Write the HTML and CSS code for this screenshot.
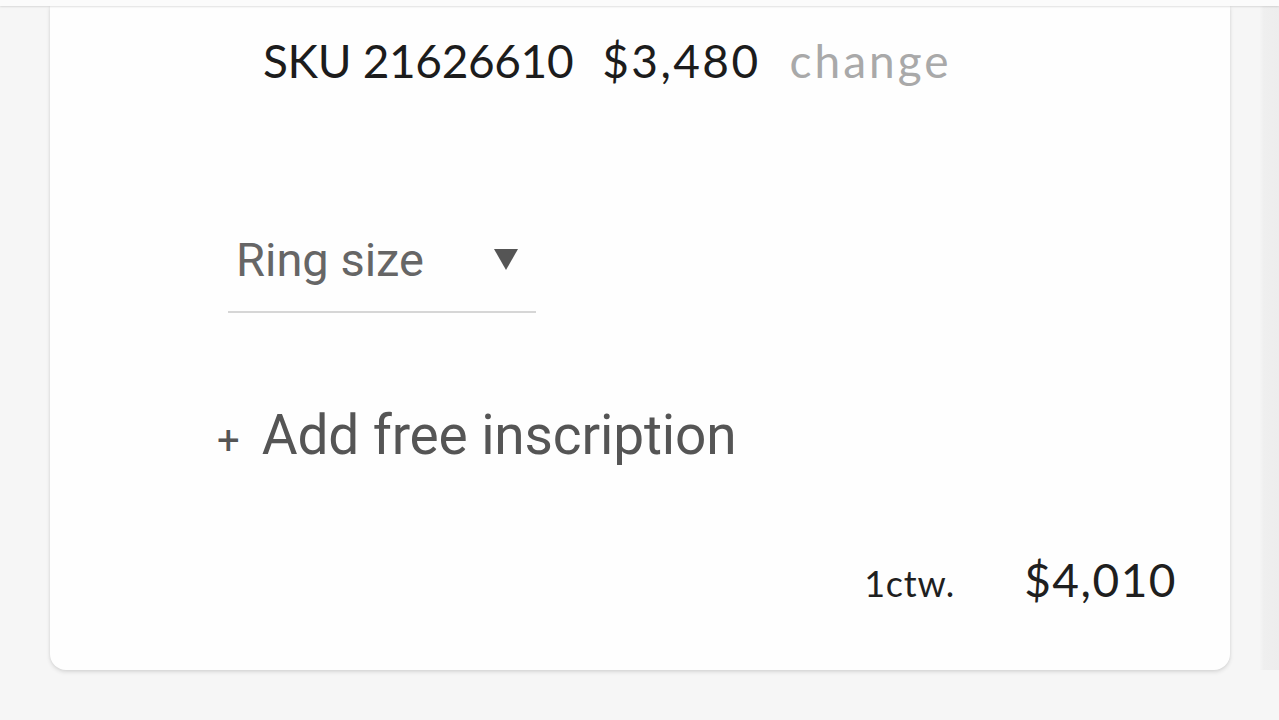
FILE: index.html
```html
<!DOCTYPE html>
<html>
<head>
<meta charset="utf-8">
<link rel="stylesheet" href="styles.css">
</head>
<body>
<div class="topbar"></div>
<div class="page">
  <div class="card">
    <div class="sku-row">
      <span class="sku">SKU 21626610</span>
      <span class="price">$3,480</span>
      <span class="change">change</span>
    </div>
    <div class="select">
      <span class="select-label">Ring size</span>
      <svg class="caret" width="24" height="21" viewBox="0 0 24 21"><polygon points="0,0 24,0 12,21" fill="#555"/></svg>
    </div>
    <div class="inscription">
      <span class="plus">+</span>
      <span class="ins-text">Add free inscription</span>
    </div>
    <div class="total-row">
      <span class="ctw">1ctw.</span>
      <span class="total">$4,010</span>
    </div>
  </div>
  <div class="rail"></div>
</div>
</body>
</html>
```
FILE: styles.css
```css
html, body {
  margin: 0;
  padding: 0;
}
body {
  width: 1279px;
  height: 720px;
  overflow: hidden;
  background: #f6f6f6;
  font-family: Lato, "Open Sans", sans-serif;
}
.topbar {
  height: 6px;
  background: #fbfbfb;
  box-shadow: 0 1px 2px rgba(0,0,0,0.12);
  position: relative;
  z-index: 2;
}
.page {
  display: flex;
  padding-left: 50px;
}
.card {
  width: 1180px;
  height: 664px;
  box-sizing: border-box;
  background: #fefefe;
  border-radius: 0 0 16px 16px;
  box-shadow: 0 2px 4px rgba(0,0,0,0.12), 0 0 3px rgba(0,0,0,0.06);
  display: flex;
  flex-direction: column;
  padding: 27px 53px 0 0;
}
.rail {
  flex: 1;
  margin-left: 30px;
  background: linear-gradient(to right, #f5f5f5, #efefef 20%, #ededed);
}
.sku-row {
  display: flex;
  align-items: baseline;
  padding-left: 213px;
  font-size: 46px;
  color: #1c1c1c;
  line-height: 56px;
}
.sku { margin-right: 29px; letter-spacing: -0.35px; }
.price { margin-right: 29px; letter-spacing: 2.4px; }
.change { color: #a9a9a9; letter-spacing: 3px; }
.select {
  margin-top: 140px;
  margin-left: 178px;
  width: 308px;
  height: 84px;
  display: flex;
  align-items: flex-start;
  padding: 4px 18px 0 8px;
  box-sizing: border-box;
  border-bottom: 2px solid #d6d6d6;
  font-family: Roboto, sans-serif;
}
.select-label {
  flex: 1;
  font-size: 47px;
  line-height: 54px;
  color: #666;
}
.caret {
  display: block;
  margin-top: 16px;
}
.inscription {
  margin-top: 90px;
  margin-left: 167px;
  display: flex;
  align-items: baseline;
  font-family: Roboto, sans-serif;
  color: #555;
  line-height: 64px;
}
.plus {
  font-size: 40px;
  margin-right: 22px;
}
.ins-text {
  font-size: 55px;
  letter-spacing: -0.15px;
}
.total-row {
  margin-top: 79px;
  display: flex;
  justify-content: flex-end;
  align-items: baseline;
  color: #1f1f1f;
  line-height: 56px;
}
.ctw {
  font-size: 36px;
  letter-spacing: 0.8px;
  margin-right: 69px;
}
.total {
  font-size: 46px;
  letter-spacing: 1.5px;
}
```
